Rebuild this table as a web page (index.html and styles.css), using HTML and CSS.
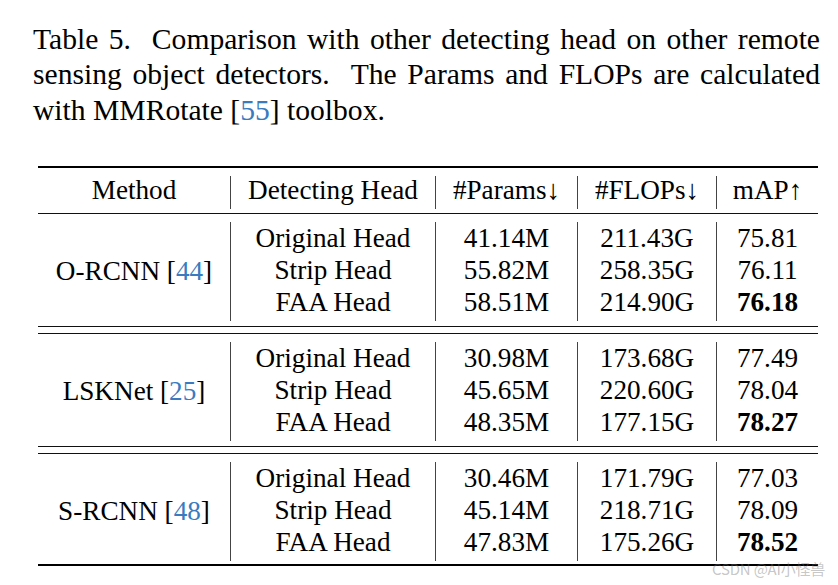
FILE: index.html
```html
<!DOCTYPE html>
<html>
<head>
<meta charset="utf-8">
<link rel="stylesheet" href="styles.css">
</head>
<body>
<div class="caption">
  <span class="cl just">Table 5.&nbsp; Comparison with other detecting head on other remote</span>
  <span class="cl just">sensing object detectors.&nbsp; The Params and FLOPs are calculated</span>
  <span class="cl">with MMRotate [<span class="ref">55</span>] toolbox.</span>
</div>
<div class="tbl">
  <div class="row head">
    <div class="c first">Method</div>
    <div class="c">Detecting Head</div>
    <div class="c">#Params↓</div>
    <div class="c">#FLOPs↓</div>
    <div class="c">mAP↑</div>
  </div>
  <div class="row grp">
    <div class="c first method">O-RCNN [<span class="ref">44</span>]</div>
    <div class="c">Original Head<br>Strip Head<br>FAA Head</div>
    <div class="c">41.14M<br>55.82M<br>58.51M</div>
    <div class="c">211.43G<br>258.35G<br>214.90G</div>
    <div class="c">75.81<br>76.11<br><b>76.18</b></div>
  </div>
  <div class="dbl"></div>
  <div class="row grp">
    <div class="c first method">LSKNet [<span class="ref">25</span>]</div>
    <div class="c">Original Head<br>Strip Head<br>FAA Head</div>
    <div class="c">30.98M<br>45.65M<br>48.35M</div>
    <div class="c">173.68G<br>220.60G<br>177.15G</div>
    <div class="c">77.49<br>78.04<br><b>78.27</b></div>
  </div>
  <div class="dbl"></div>
  <div class="row grp last">
    <div class="c first method">S-RCNN [<span class="ref">48</span>]</div>
    <div class="c">Original Head<br>Strip Head<br>FAA Head</div>
    <div class="c">30.46M<br>45.14M<br>47.83M</div>
    <div class="c">171.79G<br>218.71G<br>175.26G</div>
    <div class="c">77.03<br>78.09<br><b>78.52</b></div>
  </div>
</div>
<div class="wm">CSDN @AI小怪兽</div>
</body>
</html>
```
FILE: styles.css
```css
html, body {
  background: #ffffff;
}
body {
  margin: 8px;
  font-family: "Liberation Serif", "Times New Roman", serif;
  color: #000;
}
.caption {
  margin: 13.5px 0 0 25px;
  width: 787px;
  font-size: 29.6px;
  line-height: 35.5px;
}
.cl {
  display: block;
  white-space: nowrap;
}
.cl.just {
  text-align: justify;
  text-align-last: justify;
  white-space: normal;
}
.ref {
  color: #3a7bbf;
}
.tbl {
  margin: 38px 0 0 30px;
  width: 780px;
  border-top: 2px solid #000;
  border-bottom: 2px solid #000;
  font-size: 27.2px;
}
.row {
  display: grid;
  grid-template-columns: 192px 205px 142px 139px 102px;
}
.c {
  text-align: center;
  white-space: nowrap;
  border-left: 1.2px solid #444;
}
.c.first {
  border-left: none;
}
.head {
  padding: 8px 0 4.5px;
  border-bottom: 1px solid #111;
}
.head .c {
  line-height: 28px;
  padding-bottom: 4.5px;
}
.grp {
  padding: 8px 0 5px;
}
.grp.last {
  padding-bottom: 3px;
}
.grp .c {
  line-height: 32px;
  padding-bottom: 3px;
}
.grp .method {
  display: flex;
  align-items: center;
  justify-content: center;
  padding-bottom: 1px;
}
.dbl {
  height: 6px;
  border-top: 1px solid #111;
  border-bottom: 1px solid #111;
}
.wm {
  position: absolute;
  left: 712px;
  top: 558px;
  font-family: "Noto Sans CJK SC", "Noto Sans", sans-serif;
  font-size: 15px;
  color: rgba(110, 110, 110, 0.4);
  letter-spacing: -0.2px;
}
```
